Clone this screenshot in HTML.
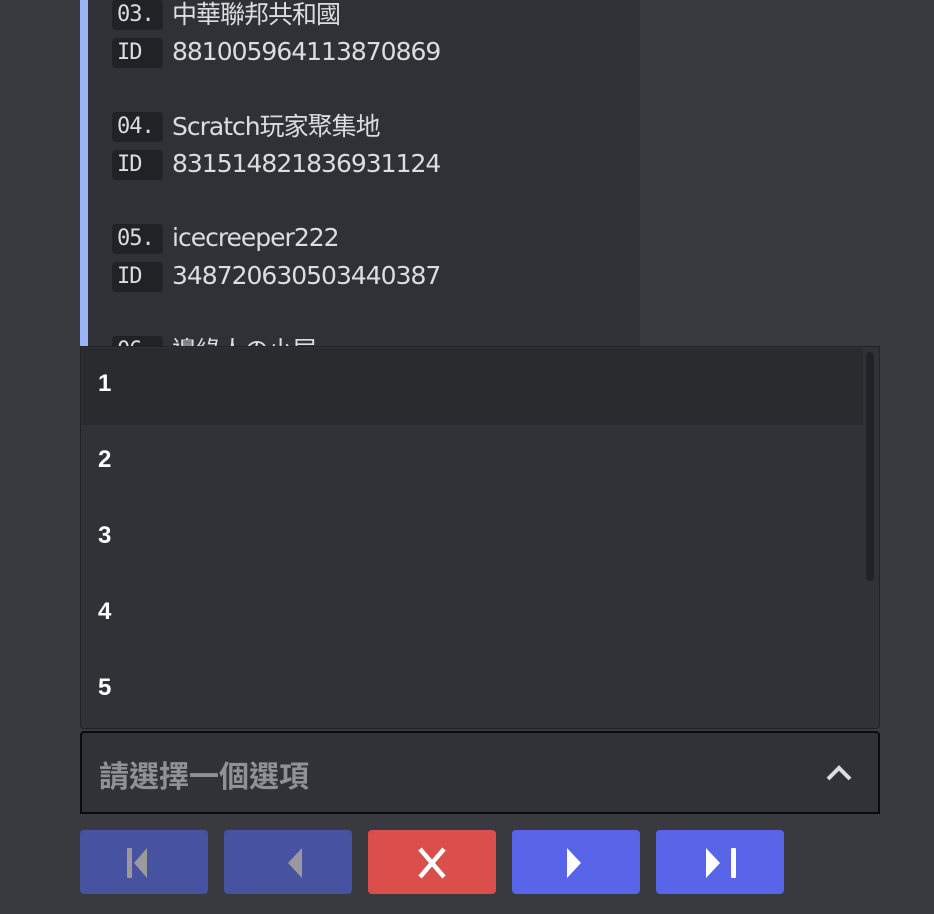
<!DOCTYPE html>
<html><head><meta charset="utf-8"><style>
body{margin:0;width:934px;height:914px;background:#393a40;position:relative;overflow:hidden;font-family:"Liberation Sans","Noto Sans CJK TC",sans-serif}
.card{position:absolute;left:80px;top:-10px;width:560px;height:370px;background:#2f3136;border-left:8px solid #9ab4f5;box-sizing:border-box;overflow:hidden}
.row{position:absolute;left:24px;height:30px;display:flex;align-items:center}
.code{width:51px;height:30px;background:#202225;border-radius:4px;color:#dcddde;font-family:"DejaVu Sans Mono",monospace;font-size:22px;line-height:30px;box-sizing:border-box;padding-left:5px;letter-spacing:-1px}
.t{margin-left:9px;color:#dcddde;font-size:25px;font-family:"DejaVu Sans","Noto Sans CJK TC",sans-serif;letter-spacing:-1px;margin-top:-4px}
.menu{position:absolute;left:80px;top:346px;width:800px;height:383px;background:#303237;border:1px solid #202225;box-sizing:border-box;border-radius:0 0 4px 4px}
.hov{position:absolute;left:1px;top:1px;width:781px;height:77px;background:#292c2f}
.it{position:absolute;left:17px;color:#fff;font-weight:bold;font-size:24px}
.sb{position:absolute;left:785px;top:5px;width:8px;height:229px;background:#202225;border-radius:4px}
.sel{position:absolute;left:80px;top:731px;width:800px;height:83px;background:#303237;border:2px solid #0b0b0d;box-sizing:border-box;border-radius:4px 4px 0 0}
.sel span{position:absolute;left:17px;top:19px;color:#8e9297;font-size:30px;font-weight:bold}
.btn{position:absolute;top:830px;width:128px;height:64px;border-radius:4px}
</style></head><body>
<div class="card">
<div class="row" style="top:10px"><div class="code">03.</div><div class="t">中華聯邦共和國</div></div>
<div class="row" style="top:48px"><div class="code">ID</div><div class="t">881005964113870869</div></div>
<div class="row" style="top:122px"><div class="code">04.</div><div class="t">Scratch玩家聚集地</div></div>
<div class="row" style="top:160px"><div class="code">ID</div><div class="t">831514821836931124</div></div>
<div class="row" style="top:234px"><div class="code">05.</div><div class="t">icecreeper222</div></div>
<div class="row" style="top:272px"><div class="code">ID</div><div class="t">348720630503440387</div></div>
<div class="row" style="top:346px"><div class="code">06.</div><div class="t">邊緣人の小屋</div></div>
</div>
<div class="menu">
<div class="hov"></div>
<div class="it" style="top:23px">1</div>
<div class="it" style="top:99px">2</div>
<div class="it" style="top:175px">3</div>
<div class="it" style="top:251px">4</div>
<div class="it" style="top:327px">5</div>
<div class="sb"></div>
</div>
<div class="sel"><span>請選擇一個選項</span>
<svg style="position:absolute;left:743px;top:30px" width="28" height="20" viewBox="0 0 28 20"><path d="M3 16 L14 5 L25 16" stroke="#dcddde" stroke-width="4" fill="none"/></svg></div>
<div class="btn" style="left:80px;background:#4752a0"><svg width="128" height="64"><rect x="47" y="18" width="5" height="30" rx="1" fill="#9a9a9e"/><path d="M67 18 L54 33 L67 48Z" fill="#9a9a9e"/></svg></div>
<div class="btn" style="left:224px;background:#4752a0"><svg width="128" height="64"><path d="M78 18 L64 33 L78 48Z" fill="#9a9a9e"/></svg></div>
<div class="btn" style="left:368px;background:#da4e4c"><svg width="128" height="64"><path d="M52 19 L76 47 M76 19 L52 47" stroke="#fff" stroke-width="4.5"/></svg></div>
<div class="btn" style="left:512px;background:#5865e8"><svg width="128" height="64"><path d="M55 18 L69 33 L55 48Z" fill="#fff"/></svg></div>
<div class="btn" style="left:656px;background:#5865e8"><svg width="128" height="64"><path d="M50 18 L64 33 L50 48Z" fill="#fff"/><rect x="75" y="18" width="5" height="30" rx="1" fill="#fff"/></svg></div>
</body></html>
